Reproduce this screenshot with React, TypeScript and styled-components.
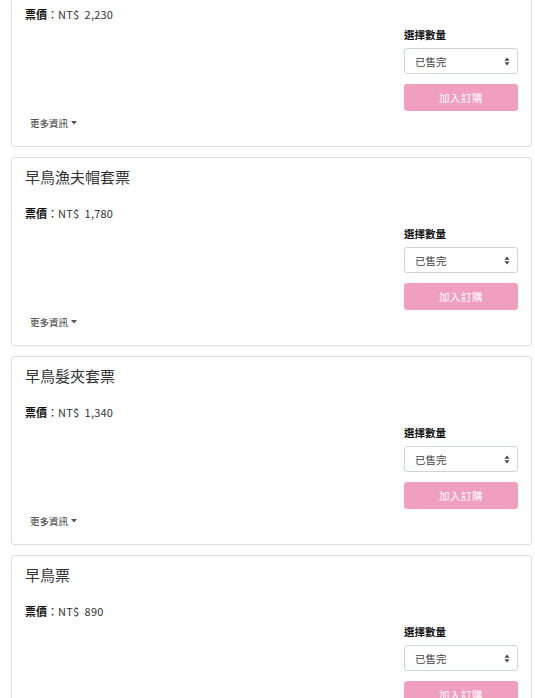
import React from "react";
import styled, { createGlobalStyle } from "styled-components";

const Global = createGlobalStyle`
  html, body { margin: 0; padding: 0; background: #fff; }
  body {
    font-family: "Noto Sans CJK TC", "Noto Sans", "Liberation Sans", sans-serif;
    color: #333;
    overflow: hidden;
  }
`;

const Page = styled.div`
  display: flex;
  flex-direction: column;
  gap: 10px;
  padding: 0 3px 0 11px;
  margin-top: -42px;
`;

const Card = styled.section`
  box-sizing: border-box;
  height: 189px;
  border: 1px solid #dedede;
  border-radius: 3px;
  padding: 9px 13px 0 13px;
  display: flex;
  flex-direction: column;
  background: #fff;
`;

const Title = styled.h3`
  margin: 0;
  font-size: 15px;
  line-height: 20px;
  font-weight: 400;
  color: #333;
`;

const Price = styled.div`
  margin-top: 18px;
  font-size: 11px;
  line-height: 16px;
  color: #222;
  display: flex;
  align-items: center;
`;

const PriceLabel = styled.span`
  font-weight: 700;
  color: #111;
`;

const PriceValue = styled.span`
  color: #333;
  letter-spacing: 0.2px;
`;

const Order = styled.div`
  align-self: flex-end;
  width: 114px;
  margin-top: 5px;
  display: flex;
  flex-direction: column;
`;

const QtyLabel = styled.div`
  font-size: 10.5px;
  line-height: 16px;
  font-weight: 700;
  color: #111;
`;

const Select = styled.div`
  box-sizing: border-box;
  margin-top: 5px;
  height: 26px;
  border: 1px solid #cfd3da;
  border-radius: 3px;
  padding: 0 7px 0 10px;
  display: flex;
  align-items: center;
  justify-content: space-between;
  font-size: 10.5px;
  color: #444;
`;

const AddButton = styled.button`
  box-sizing: border-box;
  margin-top: 10px;
  height: 27px;
  width: 100%;
  border: none;
  border-radius: 3px;
  background: #f0a0bd;
  color: #fff;
  font-family: inherit;
  font-size: 10.5px;
  letter-spacing: 0.5px;
  padding: 0;
`;

const More = styled.div`
  margin-top: 5px;
  margin-left: 5px;
  font-size: 9.5px;
  line-height: 14px;
  color: #333;
  display: flex;
  align-items: center;
  gap: 3px;
`;

const Caret = () => (
  <svg width="6" height="4" viewBox="0 0 6 4">
    <path d="M0 0h6L3 3.5z" fill="#555" />
  </svg>
);

const Arrows = () => (
  <svg width="6" height="9" viewBox="0 0 6 9">
    <path d="M3 0.5L5.5 3.8H0.5z M3 8.5L0.5 5.2H5.5z" fill="#444" />
  </svg>
);

const tickets = [
  { title: "早鳥套票", price: "2,230" },
  { title: "早鳥漁夫帽套票", price: "1,780" },
  { title: "早鳥髮夾套票", price: "1,340" },
  { title: "早鳥票", price: "890" },
];

export default function App() {
  return (
    <>
      <Global />
      <Page>
        {tickets.map((t) => (
          <Card key={t.title}>
            <Title>{t.title}</Title>
            <Price>
              <PriceLabel>票價</PriceLabel>
              <span>：</span>
              <PriceValue>NT$&nbsp;&nbsp;{t.price}</PriceValue>
            </Price>
            <Order>
              <QtyLabel>選擇數量</QtyLabel>
              <Select>
                <span>已售完</span>
                <Arrows />
              </Select>
              <AddButton>加入訂購</AddButton>
            </Order>
            <More>
              <span>更多資訊</span>
              <Caret />
            </More>
          </Card>
        ))}
      </Page>
    </>
  );
}
